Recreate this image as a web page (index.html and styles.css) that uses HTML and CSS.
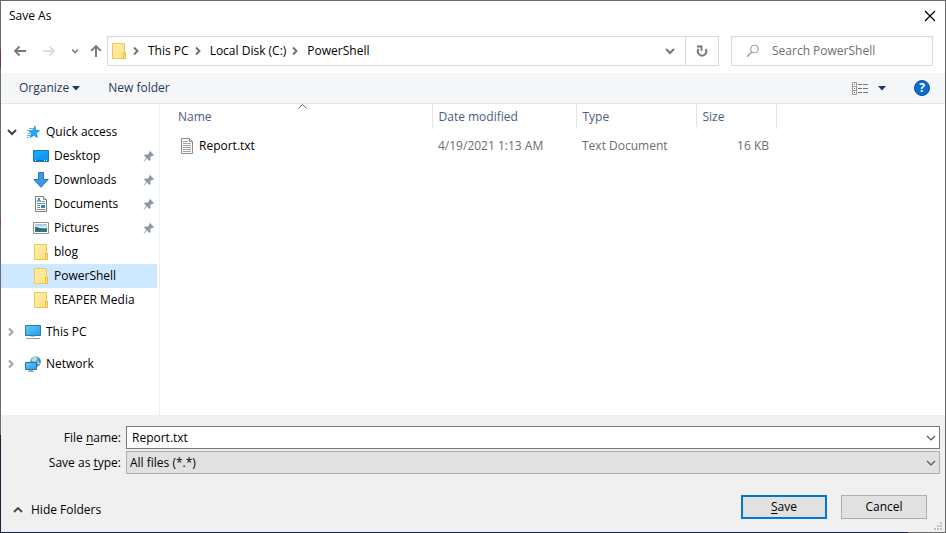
FILE: index.html
```html
<!DOCTYPE html>
<html lang="en">
<head>
<meta charset="utf-8">
<title>Save As</title>
<link rel="stylesheet" href="styles.css">
</head>
<body>
<svg class="defs" aria-hidden="true">
  <defs>
    <linearGradient id="sky" x1="0" y1="0" x2="1" y2="1"><stop offset="0" stop-color="#66cbfb"/><stop offset="1" stop-color="#1f9cf0"/></linearGradient>
    <linearGradient id="paper" x1="0" y1="0" x2="1" y2="1"><stop offset="0" stop-color="#ffedac"/><stop offset="1" stop-color="#ffe084"/></linearGradient>
    <linearGradient id="photo" x1="0" y1="0" x2="0" y2="1"><stop offset="0" stop-color="#8fc4ee"/><stop offset=".45" stop-color="#e3f2f6"/><stop offset=".6" stop-color="#3c7560"/><stop offset="1" stop-color="#2f74a8"/></linearGradient>
    <radialGradient id="globe" cx=".4" cy=".3" r=".8"><stop offset="0" stop-color="#c4ecf8"/><stop offset=".5" stop-color="#4b9ec4"/><stop offset="1" stop-color="#215f8c"/></radialGradient>
    <symbol id="folder" viewBox="0 0 16 16"><path d="M1.500.5h12v15h-12z" fill="url(#paper)" stroke="#eec94f"/><path d="M12.500 9.500h2v6h-2z" fill="#ffe48f" stroke="#e9bd38"/></symbol>
    <symbol id="pin" viewBox="0 0 12 12"><path d="M7 1l4 4-1 1-1-.3L7.400 7.500 7.500 10l-1 1-2.400-2.400L1 11.500l-.5-.5L3.400 8 1 5.500l1-1 2.500.1L6.300 3 6 2z" fill="#8d99a3"/></symbol>
    <symbol id="right" viewBox="0 0 8 10"><path d="M2 1.500L5.500 5 2 8.500" fill="none" stroke="currentColor" stroke-width="1.900"/></symbol>
    <symbol id="down" viewBox="0 0 10 8"><path d="M1 2l4 4 4-4" fill="none" stroke="currentColor" stroke-width="var(--w, 2)"/></symbol>
  </defs>
</svg>
<main class="dialog">
  <header class="titlebar">
    <h1>Save As</h1>
    <button class="plain close" aria-label="Close"><svg width="12" height="12" viewBox="0 0 12 12"><path d="M1 1l10 10M11 1L1 11" stroke="#000" stroke-width="1.200"/></svg></button>
  </header>

  <nav class="navbar" aria-label="Location">
    <div class="history">
      <button class="plain" aria-label="Back"><svg width="14" height="12" viewBox="0 0 14 12"><path d="M13 6H2M6.500 1.500L2 6l4.500 4.500" fill="none" stroke="#777" stroke-width="1.800"/></svg></button>
      <button class="plain" aria-label="Forward" disabled><svg width="14" height="12" viewBox="0 0 14 12"><path d="M1 6h11M7.500 1.500L12 6l-4.500 4.500" fill="none" stroke="#dcdcdc" stroke-width="1.800"/></svg></button>
      <button class="plain recent" aria-label="Recent locations"><svg width="8" height="6" viewBox="0 0 10 8"><use href="#down"/></svg></button>
      <button class="plain" aria-label="Up"><svg width="12" height="14" viewBox="0 0 12 14"><path d="M6 13V2M1.200 6.800L6 2l4.800 4.800" fill="none" stroke="#777" stroke-width="1.900"/></svg></button>
    </div>
    <div class="address">
      <svg width="16" height="16"><use href="#folder"/></svg>
      <svg class="sep" width="8" height="10"><use href="#right"/></svg>
      <a href="#">This PC</a>
      <svg class="sep" width="8" height="10"><use href="#right"/></svg>
      <a href="#">Local Disk (C:)</a>
      <svg class="sep" width="8" height="10"><use href="#right"/></svg>
      <a href="#">PowerShell</a>
      <button class="plain drop" aria-label="Previous locations"><svg width="10" height="8"><use href="#down"/></svg></button>
      <button class="plain refresh" aria-label="Refresh"><svg width="12" height="12" viewBox="0 0 12 12"><path d="M2.600 3.900A4.200 4.200 0 1 0 9.600 4" fill="none" stroke="#777" stroke-width="1.900"/><path d="M1 1.500h4.500V6" fill="none" stroke="#777" stroke-width="1.800"/></svg></button>
    </div>
    <label class="search">
      <svg width="14" height="14" viewBox="0 0 14 14"><circle cx="8.500" cy="5" r="3.900" fill="none" stroke="#9a969c"/><path d="M5.700 8L1 12.700" stroke="#a98fa6" stroke-width="1.300"/></svg>
      <input type="text" placeholder="Search PowerShell" aria-label="Search PowerShell">
    </label>
  </nav>

  <div class="toolbar">
    <button class="plain organize">Organize <svg width="8" height="5" viewBox="0 0 8 5"><path d="M0 0h8L4 4.500z" fill="#1e395b"/></svg></button>
    <button class="plain">New folder</button>
    <button class="plain view" aria-label="Change your view">
      <svg width="17" height="13" viewBox="0 0 17 13"><path d="M.5.5h4v12h-4zM.5 4.500h4M.5 8.500h4" fill="#fff" stroke="#999"/><path d="M2 2h1v1H2z" fill="#4a82bd"/><path d="M2 6h1v1H2z" fill="#598564"/><path d="M2 10h1v1H2z" fill="#c43d3d"/><path d="M6 2.500h4m1 0h5M6 6.500h4m1 0h5M6 10.500h4m1 0h5" stroke="#777"/></svg>
      <svg width="8" height="5" viewBox="0 0 8 5"><path d="M0 0h8L4 4.500z" fill="#1e395b"/></svg>
    </button>
    <button class="help" aria-label="Help">?</button>
  </div>

  <div class="content">
    <nav class="tree" aria-label="Folders">
      <ul>
        <li class="root">
          <a href="#"><svg class="twist open" width="10" height="8"><use href="#down"/></svg><svg width="16" height="16" viewBox="0 0 16 16"><path d="M10 2l.5 4 4 .5-3 2.700.8 4.300-3.500-2.200-3.600 2.200 1.100-4L4 7l3.800-.8z" fill="#25a5ee" stroke="#1687cf" stroke-width=".7"/><path d="M4 4.500h4M2 6.500h3M3 9.500h2M2 11.500h3M2 13.500h2" stroke="#58b8ee"/></svg>Quick access</a>
          <ul>
            <li><a href="#"><svg width="16" height="16" viewBox="0 0 16 16"><path d="M.5 2.500h15v11H.5z" fill="#1aa4fb" stroke="#1476bd"/><path d="M1 12L15 3v9z" fill="#0f98f5"/><path d="M1 12.500h14" stroke="#0b6db5"/><path d="M2 12.500h1m8 0h1m1 0h1" stroke="#fff"/></svg>Desktop<svg class="pinned" width="12" height="12"><use href="#pin"/></svg></a></li>
            <li><a href="#"><svg width="16" height="16" viewBox="0 0 16 16"><path d="M5.500.5h5v7h4.700L8 15.300.8 7.500h4.700z" fill="#3f98e7" stroke="#2577c4"/></svg>Downloads<svg class="pinned" width="12" height="12"><use href="#pin"/></svg></a></li>
            <li><a href="#"><svg width="16" height="16" viewBox="0 0 16 16"><path d="M2.500.5h8l3 3v12h-11z" fill="#fff" stroke="#7f7f7f"/><path d="M10.500.5v3h3" fill="#eee" stroke="#888"/><path d="M4 6l2-4 1.500 4M5 4.800h2" fill="none" stroke="#237ec2"/><path d="M9 5.500h3M4 7.500h8M4 9.500h3M4 11.500h3M4 13.500h8" stroke="#6f8fa9"/><path d="M8 9h4v3H8z" fill="#3286c4"/></svg>Documents<svg class="pinned" width="12" height="12"><use href="#pin"/></svg></a></li>
            <li><a href="#"><svg width="16" height="16" viewBox="0 0 16 16"><path d="M.5 2.500h15v11H.5z" fill="#fff" stroke="#929292"/><path d="M2 4h12v8H2z" fill="url(#photo)"/><path d="M2 7c4 0 5 2 12 2.500V10H2z" fill="#366d63"/></svg>Pictures<svg class="pinned" width="12" height="12"><use href="#pin"/></svg></a></li>
            <li><a href="#"><svg width="16" height="16"><use href="#folder"/></svg>blog</a></li>
            <li><a href="#" class="selected" aria-current="true"><svg width="16" height="16"><use href="#folder"/></svg>PowerShell</a></li>
            <li><a href="#"><svg width="16" height="16"><use href="#folder"/></svg>REAPER Media</a></li>
          </ul>
        </li>
        <li class="root"><a href="#"><svg class="twist" width="8" height="10"><use href="#right"/></svg><svg width="16" height="16" viewBox="0 0 16 16"><path d="M.5 1.500h15v10H.5z" fill="url(#sky)" stroke="#3b7796"/><path d="M6 12h4v1H6z" fill="#bac5ce"/><path d="M1 14.500h14" stroke="#8b9daa"/></svg>This PC</a></li>
        <li class="root"><a href="#"><svg class="twist" width="8" height="10"><use href="#right"/></svg><svg width="16" height="16" viewBox="0 0 16 16"><circle cx="10.500" cy="5.500" r="5.300" fill="url(#globe)"/><path d="M8 2l3-1 1 2-2 1.500-3 .5zM13 5l2 2-1 2-2-1z" fill="#c6e4d7" opacity=".8"/><path d="M.5 6.500h11v7H.5z" fill="url(#sky)" stroke="#28719d"/><path d="M4 14.500h4M3 15.500h6" stroke="#9aacb8"/></svg>Network</a></li>
      </ul>
    </nav>

    <section class="files">
      <table>
        <colgroup><col class="c-name"><col class="c-date"><col class="c-type"><col class="c-size"><col></colgroup>
        <thead>
          <tr><th class="name">Name<svg class="sort" width="9" height="5" viewBox="0 0 9 5"><path d="M.5 4.500l4-4 4 4" fill="none" stroke="#666"/></svg></th><th>Date modified</th><th>Type</th><th>Size</th><td></td></tr>
        </thead>
        <tbody>
          <tr><td class="name"><span class="file"><svg width="12" height="16" viewBox="0 0 12 16"><path d="M.5.500h8l3 3v12H.5z" fill="#fafafa" stroke="#8c8c8c"/><path d="M8.500.5v3h3" fill="none" stroke="#8c8c8c"/><path d="M2 3.500h5M2 5.500h8M2 7.500h8M2 9.500h8M2 11.500h8M2 13.500h8" stroke="#a6a6a6"/></svg>Report.txt</span></td><td>4/19/2021 1:13 AM</td><td>Text Document</td><td class="size">16 KB</td><td></td></tr>
        </tbody>
      </table>
    </section>
  </div>

  <form class="footer">
    <div class="fields">
      <label for="filename">File <u>n</u>ame:</label>
      <div class="combo"><input id="filename" type="text" value="Report.txt"><svg width="10" height="8"><use href="#down"/></svg></div>
      <label for="filetype">Save as <u>t</u>ype:</label>
      <div class="combo"><select id="filetype"><option>All files (*.*)</option></select><svg width="10" height="8"><use href="#down"/></svg></div>
    </div>
    <div class="actions">
      <button type="button" class="plain hide"><svg width="10" height="6" viewBox="0 0 10 6"><path d="M1 5l4-4 4 4" fill="none" stroke="#444" stroke-width="1.800"/></svg>Hide Folders</button>
      <button type="button" class="push primary"><u>S</u>ave</button>
      <button type="button" class="push">Cancel</button>
    </div>
    <svg class="grip" width="8" height="8" viewBox="0 0 8 8" aria-hidden="true"><path d="M6 0h2v2H6zM3 3h2v2H3zM6 3h2v2H6zM0 6h2v2H0zM3 6h2v2H3zM6 6h2v2H6z" fill="#bfbfbf"/></svg>
  </form>
</main>
</body>
</html>
```
FILE: styles.css
```css
* { box-sizing: border-box; }

body {
  margin: 0;
  font: 12px/16px "Segoe UI", "Open Sans", "Noto Sans", sans-serif;
  color: #000;
}

svg { display: block; flex: none; }
a { color: inherit; text-decoration: none; }
ul { margin: 0; padding: 0; list-style: none; }
button, input, select { font: inherit; color: inherit; margin: 0; border-radius: 0; }
u { text-underline-offset: 2px; }
.defs { position: absolute; width: 0; height: 0; }

.plain {
  display: flex;
  align-items: center;
  padding: 0;
  border: 0;
  background: none;
}

.dialog {
  display: flex;
  flex-direction: column;
  min-height: 100vh;
  padding: 1px;
  background:
    linear-gradient(90deg, #18223c 96%, #6b6b6b 96%) bottom / 100% 1px no-repeat,
    linear-gradient(#6b6b6b 47px, #8b4a35 47px 52px, #65386f 52px 68px, #6b6b6b 68px 218px, #8b4a35 218px 226px, #6b6b6b 226px 435px, #18223c 435px) left / 1px 100% no-repeat,
    #6b6b6b;
}

.titlebar {
  display: flex;
  align-items: center;
  justify-content: space-between;
  height: 29px;
  padding: 0 9px 0 8px;
  background: #fff;
}
.titlebar h1 { margin: 0; font-size: 12px; font-weight: 400; }

.navbar {
  display: flex;
  gap: 12px;
  height: 43px;
  padding: 6px 12px 7px;
  background: #fff;
}
.history { display: flex; align-items: center; gap: 15px; color: #777; width: 82px; }
.history .recent { margin-right: -4px; }
.address {
  display: flex;
  flex: 1;
  align-items: center;
  padding-left: 3px;
  border: 1px solid #d9d9d9;
}
.address .sep { margin: 0 8px 0 5px; color: #707070; }
.address .drop { margin-left: auto; padding: 0 10px; color: #777; }
.address .refresh { width: 33px; align-self: stretch; justify-content: center; border-left: 1px solid #d9d9d9; }
.search {
  display: flex;
  align-items: center;
  gap: 12px;
  width: 202px;
  padding-left: 14px;
  border: 1px solid #d9d9d9;
}
.search input { flex: 1; min-width: 0; padding: 0; border: 0; background: none; outline: 0; }
.search input::placeholder { color: #6d6d6d; opacity: 1; }

.toolbar {
  display: flex;
  align-items: center;
  gap: 28px;
  height: 31px;
  padding: 0 15px 0 18px;
  border-bottom: 1px solid #e4e6e9;
  background: #f5f6f7;
  color: #1e395b;
}
.organize { gap: 3px; }
.view { gap: 9px; margin-left: auto; }
.help {
  width: 16px;
  height: 16px;
  padding: 0;
  border: 1px solid #064f9c;
  border-radius: 50%;
  background: #0a6cce;
  color: #fff;
  font-weight: 700;
  line-height: 14px;
}

.content { display: flex; flex: 1; background: #fff; }
.tree { width: 159px; padding: 16px 2px 0 0; border-right: 1px solid #f0f0f0; }
.tree a { display: flex; align-items: center; gap: 5px; height: 24px; padding: 0 2px 0 32px; }
.tree .root + .root { margin-top: 8px; }
.tree .root > a { padding-left: 6px; }
.twist { margin-right: 5px; color: #a0a0a0; }
.twist.open { margin-right: 3px; color: #404040; }
.tree .selected { background: #cde8ff; }
.pinned { margin-left: auto; }

.files { flex: 1; }
table { width: 100%; table-layout: fixed; border-collapse: collapse; }
.c-name { width: 272px; }
.c-date { width: 144px; }
.c-type { width: 120px; }
.c-size { width: 80px; }
th, td { padding: 0 7px 0 6px; text-align: left; font-weight: 400; color: #6d6d6d; }
th { position: relative; height: 25px; border-right: 1px solid #e5e5e5; color: #4c607a; }
th.name { padding-left: 18px; }
.sort { position: absolute; top: 0; left: 51%; }
tbody td { height: 34px; }
td.name { padding-left: 21px; color: #000; }
td.size { text-align: right; }
.file { display: flex; align-items: center; gap: 6px; }

.footer { position: relative; height: 117px; padding: 11px 5px 13px 10px; background: #f0f0f0; }
.fields { display: grid; grid-template-columns: 110px 1fr; gap: 2px 5px; align-items: center; text-align: right; }
.combo { position: relative; }
.combo input, .combo select {
  display: block;
  width: 100%;
  height: 23px;
  padding: 0 20px 0 5px;
  border: 1px solid #7a7a7a;
  background: #fff;
  outline: 0;
}
.combo select { appearance: none; padding-left: 3px; border-color: #adadad; background: #e1e1e1; }
.combo svg { position: absolute; top: 8px; right: 4px; color: #555; --w: 1.2; pointer-events: none; }
.actions { display: flex; align-items: center; gap: 14px; margin-top: 21px; padding-right: 13px; }
.hide { gap: 8px; margin: 6px auto 0 2px; }
.push { width: 86px; height: 24px; padding: 0; border: 1px solid #adadad; background: #e1e1e1; }
.push.primary { border: 2px solid #0078d7; }
.grip { position: absolute; right: 3px; bottom: 2px; }
```
